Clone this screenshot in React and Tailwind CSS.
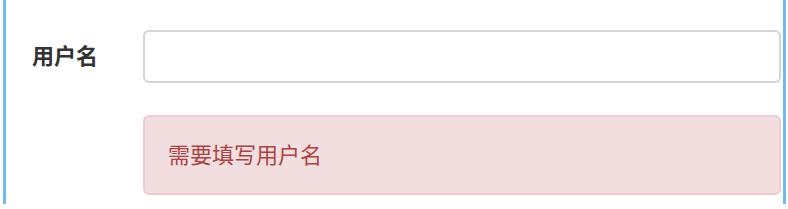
import React from "react";

export default function App() {
  return (
    <div className="w-[788px] h-[209px] bg-white" style={{ fontFamily: '"Liberation Sans", "Noto Sans CJK SC", sans-serif' }}>
      <div className="ml-[3px] w-[783px] h-[204px] border-l-[3px] border-r-[3px] border-[#72b9ef] pt-[30px]">
        {/* 用户名 */}
        <div className="flex items-center h-[53px]">
          <label className="w-[137px] pl-[26px] text-[22px] font-bold text-[#333]">用户名</label>
          <input
            type="text"
            className="w-[638px] h-[53px] border-2 border-[#d4d4d4] rounded-[6px] bg-white outline-none"
          />
        </div>
        {/* 错误提示 */}
        <div className="flex mt-[32px]">
          <div className="ml-[137px] w-[638px] h-[80px] flex items-center px-[23px] bg-[#f2dede] border-2 border-[#ebccd1] rounded-[6px] text-[#a94442] text-[22px]">
            需要填写用户名
          </div>
        </div>
      </div>
    </div>
  );
}
